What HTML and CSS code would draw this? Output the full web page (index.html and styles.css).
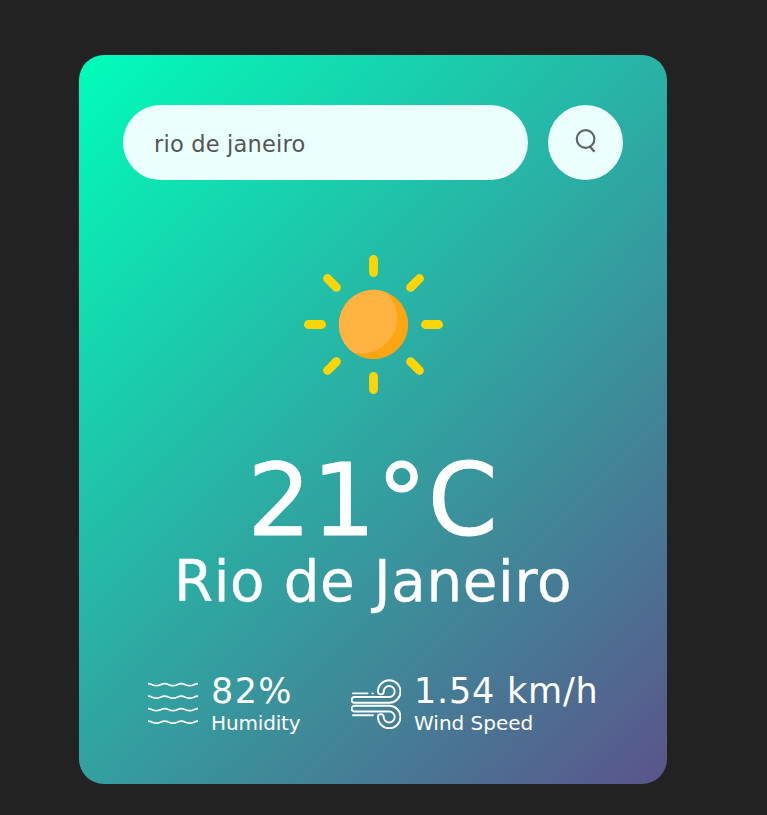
FILE: index.html
```html
<!DOCTYPE html>
<html lang="en">
<head>
<meta charset="utf-8">
<title>Weather</title>
<link rel="stylesheet" href="styles.css">
</head>
<body>
<main class="card">
  <div class="search">
    <input class="search-input" type="text" value="rio de janeiro" spellcheck="false" aria-label="City">
    <button class="search-button" aria-label="Search">
      <svg width="22" height="26" viewBox="0 0 22 26" fill="none" stroke="#626666" stroke-width="2.2">
        <circle cx="10.6" cy="11" r="8.8"/>
        <path d="M14.8 18.4l4.6 5.4" stroke-width="2.4"/>
      </svg>
    </button>
  </div>
  <section class="weather">
    <svg class="sun" viewBox="0 0 139 139">
      <defs><clipPath id="disc"><circle cx="69.5" cy="69.5" r="34.7"/></clipPath></defs>
      <circle cx="69.5" cy="69.5" r="34.7" fill="#ffa412"/>
      <circle cx="57.7" cy="63" r="35.5" fill="#ffb341" clip-path="url(#disc)"/>
      <path d="M69.5 4.4V17.6M69.5 121.4V134.6M4.4 69.5H17.6M121.4 69.5H134.6M23.5 23.5l8.9 8.9M115.5 23.5l-8.9 8.9M23.5 115.5l8.9-8.9M115.5 115.5l-8.9-8.9" stroke="#ffd503" stroke-width="8.8" stroke-linecap="round"/>
    </svg>
    <h1 class="temp">21°C</h1>
    <h2 class="city">Rio de Janeiro</h2>
  </section>
  <div class="details">
    <div class="detail">
      <svg class="detail-icon" viewBox="0 0 50 50" fill="none" stroke="#fff" stroke-width="1.7">
        <path d="M0 4.7C4 4.7 4.5 6.7 8.3 6.7S12.8 4.7 16.7 4.7 21 6.7 25 6.7 29.4 4.7 33.3 4.7 37.7 6.7 41.7 6.7 46 4.7 50 4.7"/>
        <path d="M0 17.2C4 17.2 4.5 19.2 8.3 19.2S12.8 17.2 16.7 17.2 21 19.2 25 19.2 29.4 17.2 33.3 17.2 37.7 19.2 41.7 19.2 46 17.2 50 17.2"/>
        <path d="M0 29.7C4 29.7 4.5 31.7 8.3 31.7S12.8 29.7 16.7 29.7 21 31.7 25 31.7 29.4 29.7 33.3 29.7 37.7 31.7 41.7 31.7 46 29.7 50 29.7"/>
        <path d="M0 42.2C4 42.2 4.5 44.2 8.3 44.2S12.8 42.2 16.7 42.2 21 44.2 25 44.2 29.4 42.2 33.3 42.2 37.7 44.2 41.7 44.2 46 42.2 50 42.2"/>
      </svg>
      <div>
        <p class="value humidity-value">82%</p>
        <p class="label humidity-label">Humidity</p>
      </div>
    </div>
    <div class="detail">
      <svg class="detail-icon" viewBox="0 0 50 50" fill="none" stroke="#fff" stroke-width="1.9" stroke-linecap="round">
        <path d="M2 14.4H16.5M21.4 14.4h.4M2 36.2H22"/>
        <path d="M3.5 18H38.2a5.5 5.5 0 1 0-5.5-5.5 2.9 2.9 0 0 1-5.8 0 11.3 11.3 0 1 1 11.3 11.3H3.5a2.9 2.9 0 0 1 0-5.8z"/>
        <path d="M3.5 32.5H38.2a5.5 5.5 0 1 1-5.5 5.5 2.9 2.9 0 0 0-5.8 0 11.3 11.3 0 1 0 11.3-11.3H3.5a2.9 2.9 0 0 0 0 5.8z"/>
      </svg>
      <div>
        <p class="value">1.54 km/h</p>
        <p class="label">Wind Speed</p>
      </div>
    </div>
  </div>
</main>
</body>
</html>
```
FILE: styles.css
```css
* {
  margin: 0;
  padding: 0;
  box-sizing: border-box;
}

body {
  background: #222;
  font-family: Verdana, "DejaVu Sans", sans-serif;
  overflow: hidden;
}

.card {
  width: 588px;
  height: 729px;
  margin: 55px 0 0 79px;
  padding: 50px 44px;
  border-radius: 25px;
  background: linear-gradient(135deg, #00feba, #5b548a);
  color: #fff;
}

.search {
  display: flex;
  gap: 20px;
}

.search-input {
  width: 405px;
  height: 75px;
  padding: 3px 31px 0;
  border: 0;
  outline: 0;
  border-radius: 38px;
  background: #ebfffc;
  color: #555;
  font: 22.5px Verdana, "DejaVu Sans", sans-serif;
  letter-spacing: 0.2px;
}

.search-button {
  display: flex;
  justify-content: center;
  width: 75px;
  height: 75px;
  padding-top: 23px;
  border: 0;
  border-radius: 50%;
  background: #ebfffc;
}

.weather {
  display: flex;
  flex-direction: column;
  align-items: center;
  padding-top: 75px;
}

.sun {
  width: 139px;
  height: 139px;
}

.temp {
  margin-top: 58px;
  font-size: 100px;
  font-weight: 400;
  line-height: 98px;
  letter-spacing: 1px;
  -webkit-text-stroke: 1px #fff;
}

.city {
  margin-top: -1px;
  font-size: 56.25px;
  font-weight: 400;
  line-height: 66px;
  letter-spacing: 0.7px;
  white-space: nowrap;
  -webkit-text-stroke: 0.4px #fff;
}

.details {
  display: flex;
  margin-top: 55px;
  padding-left: 25px;
}

.detail {
  display: flex;
  gap: 13px;
  width: 203px;
}

.detail-icon {
  width: 50px;
  height: 50px;
  margin-top: 9px;
  flex: none;
}

.value {
  padding-top: 1px;
  font-size: 35px;
  line-height: 40px;
  letter-spacing: 0.8px;
  white-space: nowrap;
}

.humidity-value {
  letter-spacing: 1.4px;
}

.label {
  font-size: 20px;
  line-height: 24px;
  white-space: nowrap;
}

.humidity-label {
  letter-spacing: -0.15px;
}
```
